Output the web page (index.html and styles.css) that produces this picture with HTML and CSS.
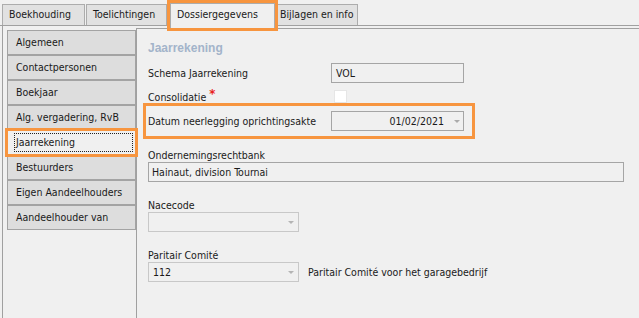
FILE: index.html
```html
<!DOCTYPE html>
<html lang="nl">
<head>
  <meta charset="UTF-8">
  <meta name="viewport" content="width=device-width, initial-scale=1.0">
  <title>Dossiergegevens</title>
  <link rel="stylesheet" href="styles.css">
</head>
<body>
  <div class="tabs">
    <div class="tab tab-boek">Boekhouding</div>
    <div class="tab tab-toel">Toelichtingen</div>
    <div class="tab tab-dossier active">Dossiergegevens</div>
    <div class="tab tab-bijl">Bijlagen en info</div>
  </div>

  <div class="main">
    <ul class="nav">
      <li>Algemeen</li>
      <li>Contactpersonen</li>
      <li>Boekjaar</li>
      <li>Alg. vergadering, RvB</li>
      <li class="current"><span class="focus">Jaarrekening</span></li>
      <li>Bestuurders</li>
      <li>Eigen Aandeelhouders</li>
      <li>Aandeelhouder van</li>
    </ul>

    <div class="panel">
      <h2 class="section-title">Jaarrekening</h2>

      <div class="row">
        <label>Schema Jaarrekening</label>
        <div class="field field-short">VOL</div>
      </div>

      <div class="row row-check">
        <label>Consolidatie <span class="req">*</span></label>
        <span class="checkbox"></span>
      </div>

      <div class="row row-marked">
        <label>Datum neerlegging oprichtingsakte</label>
        <div class="field field-short combo">
          <span class="value value-right">01/02/2021</span>
          <span class="arrow"></span>
        </div>
      </div>

      <div class="group group-first">
        <label>Ondernemingsrechtbank</label>
        <div class="field field-wide">Hainaut, division Tournai</div>
      </div>

      <div class="group">
        <label>Nacecode</label>
        <div class="field field-combo combo disabled">
          <span class="value"></span>
          <span class="arrow"></span>
        </div>
      </div>

      <div class="group">
        <label>Paritair Comité</label>
        <div class="inline">
          <div class="field field-combo combo disabled">
            <span class="value">112</span>
            <span class="arrow"></span>
          </div>
          <span class="note">Paritair Comité voor het garagebedrijf</span>
        </div>
      </div>
    </div>
  </div>
</body>
</html>
```

FILE: styles.css
```css
/* Dossiergegevens form */
html, body {
  height: 100%;
}

body {
  margin: 0;
  overflow: hidden;
  background-color: #f0f0f0;
  color: #1a1a1a;
  font-family: "DejaVu Sans Condensed", "DejaVu Sans", sans-serif;
  font-stretch: semi-condensed;
  font-size: 10.5px;
}

/* top tab strip */
.tabs {
  display: flex;
  align-items: flex-end;
  height: 25px;
  border-bottom: 1px solid #a0a0a0;
}

.tab {
  box-sizing: border-box;
  height: 21px;
  padding-left: 6px;
  line-height: 19px;
  background-color: #e1e1e1;
  border: 1px solid #acacac;
  border-bottom: none;
  white-space: nowrap;
  overflow: hidden;
}

.tab-boek {
  margin-left: 2px;
  width: 83px;
}

.tab-toel {
  margin-left: 1px;
  width: 81px;
}

.tab-dossier {
  margin-left: 3px;
  width: 105px;
}

.tab-bijl {
  margin-left: -2px;
  width: 85px;
  padding-left: 6px;
}

.tab.active {
  position: relative;
  z-index: 2;
  height: 25px;
  margin-bottom: -3px;
  line-height: 21px;
  background-color: #f0f0f0;
  outline: 3px solid #f7953f;
}

/* body: side nav + panel */
.main {
  display: flex;
  height: calc(100% - 26px);
}

.nav {
  list-style: none;
  margin: 0 0 0 2px;
  padding: 4px 0 0 4px;
  width: 129px;
  border-left: 1px solid #a0a0a0;
}

.nav li {
  box-sizing: border-box;
  height: 25px;
  padding-left: 8px;
  line-height: 23px;
  background-color: #dddddd;
  border: 1px solid #a3a3a3;
  white-space: nowrap;
}

.nav li.current {
  position: relative;
  z-index: 2;
  padding-left: 6px;
  background-color: #f0f0f0;
  outline: 3px solid #f7953f;
  outline-offset: -1px;
}

.nav .focus {
  display: block;
  box-sizing: border-box;
  height: 19px;
  margin: 2px 2px 0 0;
  padding-left: 1px;
  line-height: 17px;
  border: 1px dotted #222;
}

.panel {
  flex: 1;
  margin-top: 2px;
  padding-left: 11px;
  border-top: 1px solid #a0a0a0;
  border-left: 1px solid #a0a0a0;
}

.section-title {
  margin: 12px 0 0;
  height: 14px;
  line-height: 14px;
  font-family: "Liberation Sans", Arial, sans-serif;
  font-size: 12px;
  font-weight: bold;
  color: #a3b4ca;
}

/* label / input rows */
.row {
  display: grid;
  grid-template-columns: 183px 133px;
  align-items: center;
  margin-top: 8px;
}

.row-check {
  height: 13px;
  margin-top: 7px;
}

.row-marked {
  width: 332px;
  box-sizing: border-box;
  margin: 0 0 0 -5px;
  padding: 5px 8px 5px 2px;
  border: 3px solid #f7953f;
}

.req {
  color: #e82020;
  font-weight: bold;
  font-size: 13px;
  vertical-align: 3px;
  line-height: 0;
}

.checkbox {
  display: block;
  width: 13px;
  height: 13px;
  margin-left: 3px;
  box-sizing: border-box;
  background-color: #fff;
  border: 1px solid #e6e6e6;
}

.field {
  box-sizing: border-box;
  height: 20px;
  padding-left: 4px;
  line-height: 18px;
  background-color: #f0f0f0;
  border: 1px solid #a5a5a5;
  white-space: nowrap;
}

.field-short {
  width: 133px;
}

.field-wide {
  width: 476px;
  padding-left: 3px;
}

.field-combo {
  width: 151px;
}

.combo {
  display: flex;
  align-items: center;
}

.combo .value {
  flex: 1;
}

.combo .value-right {
  text-align: right;
  margin-right: 10px;
}

.arrow {
  width: 0;
  height: 0;
  margin-right: 3px;
  border-left: 3px solid transparent;
  border-right: 3px solid transparent;
  border-top: 3px solid #ababab;
}

.disabled {
  border-color: #c8c8c8;
}

.disabled .arrow {
  margin-right: 4px;
  border-top-color: #b4b4b4;
}

.group {
  margin-top: 16px;
}

.group-first {
  margin-top: 9px;
}

.group label {
  display: block;
  height: 14px;
  line-height: 14px;
}

.inline {
  display: flex;
  align-items: center;
}

.note {
  margin-left: 9px;
}
```
